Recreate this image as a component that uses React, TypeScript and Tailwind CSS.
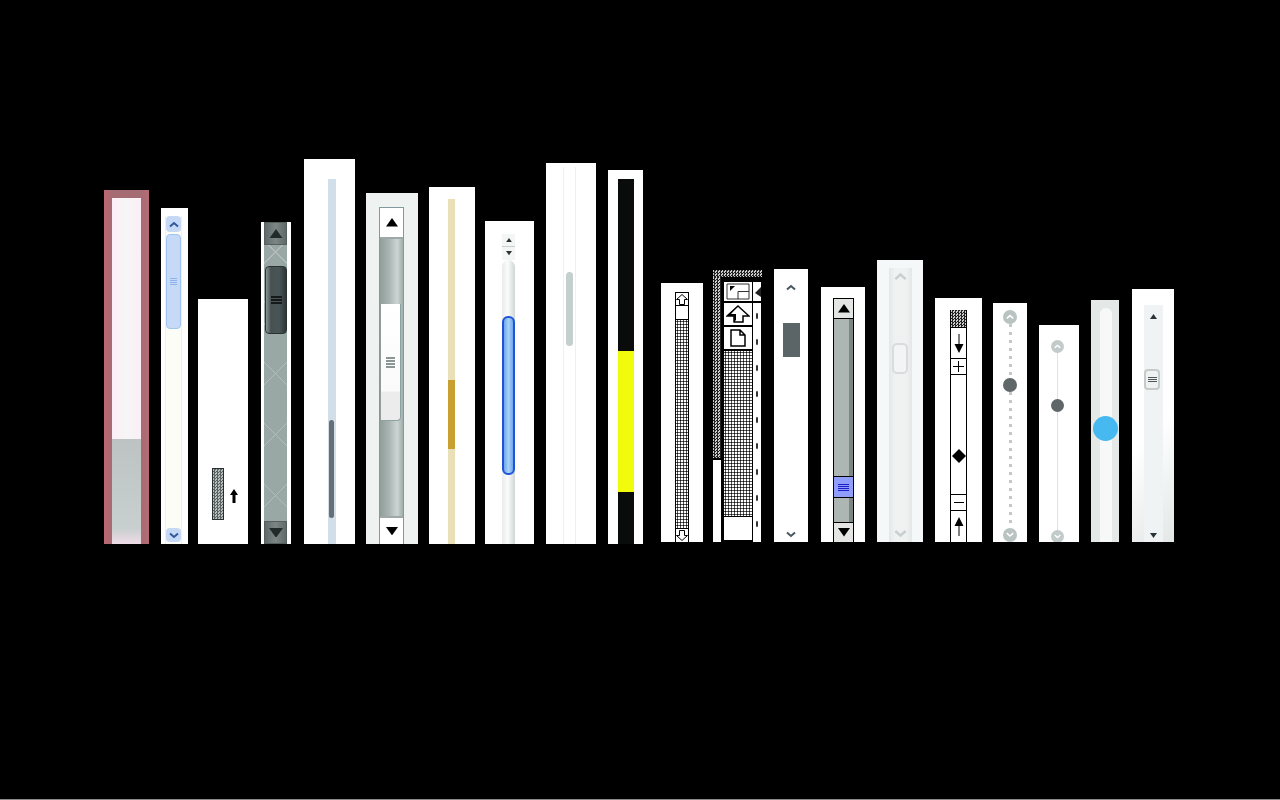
import type { ReactNode } from "react";

// small drawn glyphs used by the scrollbar buttons
function Tri({ down, size = 12, className = "text-black" }: { down?: boolean; size?: number; className?: string }) {
  return (
    <svg width={size} height={size * 0.7} viewBox="0 0 10 7" className={className}>
      <path d={down ? "M0 0H10L5 7Z" : "M5 0L10 7H0Z"} fill="currentColor" />
    </svg>
  );
}

function Chev({ down, className = "text-[#46585c]", size = 10 }: { down?: boolean; className?: string; size?: number }) {
  return (
    <svg width={size} height={size * 0.7} viewBox="0 0 10 7" className={className}>
      <path d={down ? "M1 1.5L5 5L9 1.5" : "M1 5.5L5 2L9 5.5"} fill="none" stroke="currentColor" strokeWidth="2" />
    </svg>
  );
}

function Stick({ down }: { down?: boolean }) {
  return (
    <svg width="10" height="19" viewBox="0 0 10 19" className="text-black">
      <path d={down ? "M4.5 0V10H0.5L5 19L9.5 10H5.5V0Z" : "M4.5 19V9H0.5L5 0L9.5 9H5.5V19Z"} fill="currentColor" />
    </svg>
  );
}

function Hollow({ down }: { down?: boolean }) {
  return (
    <svg width="12" height="11" viewBox="0 0 12 11" className="text-black">
      <path d={down ? "M3.5 .5H8.5V5.5H11.5L6 10.5L.5 5.5H3.5Z" : "M6 .5L11.5 5.5H8.5V10.5H3.5V5.5H.5Z"} fill="none" stroke="currentColor" />
    </svg>
  );
}

function Lines({ n, className }: { n: number; className: string }) {
  return (
    <div className="flex flex-col gap-[1px]">
      {Array.from({ length: n }).map((_, i) => (
        <div key={i} className={className} />
      ))}
    </div>
  );
}

const dots = "bg-[radial-gradient(#111_0.9px,#fff_1.25px)] bg-[length:3px_3px]";
const checker = "bg-[repeating-conic-gradient(#222_0_25%,#ccc_0_50%)] bg-[length:3px_3px]";

function FirstGroup() {
  return (
    <>
      {/* rose frame */}
      <div className="w-[45px] h-[354px] bg-[linear-gradient(90deg,#bd6573,#a66c74_18%,#a66c74_82%,#b86a75)] pt-[8px] px-[8px] flex flex-col">
        <div className="w-[29px] h-[241px] bg-[linear-gradient(90deg,#fdeef8,#f6f6f4_50%,#fbeef8)]" />
        <div className="w-[29px] flex-1 bg-[linear-gradient(180deg,#bdc3c3,#c8cfcf_85%,#efdce6)]" />
      </div>

      {/* xp blue */}
      <div className="ml-[12px] w-[27px] h-[336px] bg-white pt-[8px] pl-[4px] flex flex-col">
        <div className="w-[17px] flex-1 bg-[#fdfdf8] border-x border-[#f0f2ea] flex flex-col items-center">
          <div className="w-[15px] h-[16px] shrink-0 bg-[#c5d9f7] flex items-center justify-center rounded-sm"><Chev className="text-[#33589a]" /></div>
          <div className="mt-[2px] w-[15px] h-[95px] shrink-0 bg-[#c6daf7] border border-[#a2c4f1] rounded-sm flex items-center justify-center"><Lines n={4} className="w-[7px] h-[1px] bg-[#8eb2ea]" /></div>
          <div className="flex-1" />
          <div className="mb-[2px] w-[15px] h-[14px] shrink-0 bg-[#c5d9f7] flex items-center justify-center rounded-sm"><Chev down className="text-[#33589a]" /></div>
        </div>
      </div>

      {/* dithered thumb with arrow */}
      <div className="ml-[10px] w-[50px] h-[245px] bg-white flex items-start pt-[169px] pl-[14px]">
        <div className="w-[12px] h-[52px] border border-[#26302e] bg-[repeating-conic-gradient(#5a6362_0_25%,#b8bfbe_0_50%)] bg-[length:3px_3px]" />
        <div className="ml-[6px] mt-[21px] w-[8px] h-[14px] flex items-center justify-center">
          <svg width="8" height="14" viewBox="0 0 8 14"><path d="M2.5 14V6H0L4 0L8 6H5.5V14Z" fill="#000" /></svg>
        </div>
      </div>

      {/* dark metal */}
      <div className="ml-[13px] w-[30px] h-[322px] bg-white pl-[3px] pr-[4px]">
        <div className="h-full flex flex-col bg-[#9aa8a5] bg-[repeating-linear-gradient(45deg,transparent_0_42px,#b2bdbb_42px_43px),repeating-linear-gradient(-45deg,transparent_0_42px,#b2bdbb_42px_43px)]">
          <div className="h-[23px] bg-[linear-gradient(90deg,#5f6a69,#7c8785_50%,#5f6a69)] border border-[#565f5e] flex items-center justify-center"><Tri className="text-[#222b2b]" size={14} /></div>
          <div className="mt-[21px] ml-[1px] h-[68px] bg-[linear-gradient(90deg,#8a9695,#46514f_25%,#4a5557_65%,#2f3537)] border border-[#2b3133] rounded-sm flex items-center justify-center"><Lines n={3} className="w-[11px] h-[2px] bg-[#16191a]" /></div>
          <div className="flex-1" />
          <div className="h-[23px] bg-[linear-gradient(90deg,#5f6a69,#7c8785_50%,#5f6a69)] border border-[#565f5e] flex items-center justify-center"><Tri down className="text-[#222b2b]" size={14} /></div>
        </div>
      </div>

      {/* slim slate */}
      <div className="ml-[13px] w-[51px] h-[385px] bg-white pt-[20px] pl-[24px]">
        <div className="w-[8px] h-full bg-[#d2dfe9] pt-[241px] pl-[1px]">
          <div className="w-[5px] h-[98px] rounded-full bg-[#646f78]" />
        </div>
      </div>

      {/* light aqua */}
      <div className="ml-[11px] w-[52px] h-[351px] bg-[#eef3f1] pt-[14px] pl-[13px]">
        <div className="w-[25px] h-full border-x border-t border-[#8399a0] flex flex-col bg-[linear-gradient(90deg,#8f9d9b,#aab5b2_40%,#cdd5d2_75%,#9fadab)]">
          <div className="h-[31px] bg-white flex items-center justify-center border-b-2 border-[#9ca9a8]"><Tri size={12} /></div>
          <div className="h-[65px]" />
          <div className="w-[20px] ml-[1px] h-[117px] flex flex-col items-center justify-center bg-[linear-gradient(180deg,#fff,#fafafa_75%,#ececec_76%)] border-r border-b border-[#8fa2a2] rounded-br-sm"><Lines n={4} className="w-[9px] h-[2px] bg-[#8b9593]" /></div>
          <div className="flex-1" />
          <div className="h-[28px] bg-white flex items-center justify-center border-t-2 border-[#9ca9a8]"><Tri down size={12} /></div>
        </div>
      </div>

      {/* gold */}
      <div className="ml-[11px] w-[46px] h-[357px] bg-white pt-[12px] pl-[19px]">
        <div className="w-[7px] h-full bg-[#e9dfb9] pt-[181px]">
          <div className="h-[69px] bg-[#c8a032]" />
        </div>
      </div>

      {/* aqua blue */}
      <div className="ml-[10px] w-[49px] h-[323px] bg-white pt-[13px] pl-[17px] flex flex-col">
        <div className="w-[13px] h-[13px] shrink-0 bg-[#f4f5f5] border-b border-[#c9cfcf] flex items-center justify-center"><Tri className="text-[#2a3335]" size={6} /></div>
        <div className="w-[13px] h-[13px] shrink-0 bg-[#f4f5f5] flex items-center justify-center"><Tri down className="text-[#2a3335]" size={6} /></div>
        <div className="w-[13px] flex-1 rounded-t-full bg-[linear-gradient(90deg,#e8ecec,#fbfbfb_45%,#cfd6d6)] pt-[56px]">
          <div className="h-[159px] rounded-[6px] border-2 border-[#1f54d8] bg-[linear-gradient(90deg,#6fa6ec,#a9d2f8_50%,#6ea6ee)]" />
        </div>
      </div>

      {/* faint rails */}
      <div className="ml-[12px] w-[50px] h-[381px] bg-white pt-[4px] pl-[17px]">
        <div className="w-[13px] h-full border-x border-[#eef1f1] pt-[105px] pl-[2px]">
          <div className="w-[7px] h-[74px] rounded-full bg-[#c5cfce]" />
        </div>
      </div>

      {/* black and yellow */}
      <div className="ml-[12px] w-[35px] h-[374px] bg-white pt-[9px] pl-[10px]">
        <div className="w-[16px] h-full bg-[#0a0c0c] pt-[172px]">
          <div className="h-[141px] bg-[#f2fb0c]" />
        </div>
      </div>
    </>
  );
}

function SecondGroup() {
  return (
    <>
      {/* mac classic */}
      <div className="ml-[18px] w-[42px] h-[259px] bg-white pt-[9px] pl-[14px]">
        <div className="w-[14px] h-full border-x border-t border-black flex flex-col">
          <div className="h-[13px] border-b border-black flex items-center justify-center"><Hollow /></div>
          <div className="h-[14px] border-b border-black bg-white" />
          <div className={`flex-1 ${dots}`} />
          <div className="h-[14px] border-t border-black flex items-center justify-center"><Hollow down /></div>
        </div>
      </div>

      {/* mac window edge */}
      <div className="ml-[10px] w-[49px] h-[272px] flex flex-col">
        <div className={`h-[7px] ${checker}`} />
        <div className="flex-1 flex">
          <div className="w-[8px] flex flex-col">
            <div className={`h-[181px] ${checker}`} />
            <div className="h-[2px]" />
            <div className="flex-1 bg-white" />
          </div>
          <div className="ml-[3px] w-[28px] pt-[5px] flex flex-col gap-[2px]">
            <div className="h-[19px] bg-white flex items-center justify-center">
              <svg width="24" height="17" viewBox="0 0 24 17"><path d="M1 1H23V16H1ZM12 8.5H23M12 8.5V16" fill="none" stroke="#333" strokeWidth="1" /><path d="M4 3H9L4 8Z" fill="#000" /></svg>
            </div>
            <div className="h-[22px] bg-white flex items-center justify-center">
              <svg width="24" height="18" viewBox="0 0 24 18"><path d="M12 1L23 11H17V17H8V11H1Z" fill="#fff" stroke="#000" strokeWidth="1.5" /><path d="M12 1L1 11H8V17L10 15V9H5Z" fill="#000" /></svg>
            </div>
            <div className="h-[22px] bg-white flex items-center justify-center">
              <svg width="18" height="18" viewBox="0 0 18 18"><path d="M2 1H11L16 6V17H2ZM11 1V6H16" fill="none" stroke="#000" strokeWidth="1.5" /></svg>
            </div>
            <div className={`h-[165px] ${dots}`} />
            <div className="h-[23px] -mt-[1px] bg-white" />
          </div>
          <div className="ml-[1px] w-[8px] pt-[5px] flex flex-col gap-[2px]">
            <div className="h-[19px] bg-white flex items-center">
              <svg width="8" height="14" viewBox="0 0 8 14"><path d="M8 2L2 8L8 12Z" fill="#222" /></svg>
            </div>
            <div className="flex-1 bg-white bg-[radial-gradient(#333_0.8px,transparent_1.2px)] bg-[length:8px_26px]" />
          </div>
        </div>
      </div>

      {/* dark square thumb */}
      <div className="ml-[12px] w-[34px] h-[273px] bg-white flex flex-col items-center pt-[15px] pb-[4px]">
        <Chev />
        <div className="mt-[32px] w-[17px] h-[34px] bg-[#5b6466]" />
        <div className="flex-1" />
        <Chev down />
      </div>

      {/* motif with blue thumb */}
      <div className="ml-[13px] w-[44px] h-[255px] bg-white pt-[11px] pl-[12px]">
        <div className="w-[21px] h-full border-x border-t border-black flex flex-col bg-[linear-gradient(90deg,#aeb6b3_80%,#7c8684_80%)]">
          <div className="h-[20px] bg-[#e3e6e3] border-b border-black flex items-center justify-center"><Tri size={12} /></div>
          <div className="h-[157px]" />
          <div className="h-[22px] bg-[#8f9dfb] border-y border-black flex items-center justify-center"><Lines n={4} className="w-[11px] h-[1px] bg-[#1c1cc8]" /></div>
          <div className="flex-1" />
          <div className="h-[20px] bg-[#e3e6e3] border-t border-black flex items-center justify-center"><Tri down size={12} /></div>
        </div>
      </div>

      {/* pale frosted */}
      <div className="ml-[12px] w-[46px] h-[282px] bg-[#f5f8f8] pt-[8px] pl-[12px]">
        <div className="w-[23px] h-full bg-[linear-gradient(90deg,#e3e7e7,#f0f2f2_25%,#f0f2f2_75%,#e3e7e7)] flex flex-col items-center pt-[4px] pb-[4px]">
          <Chev className="text-[#c9d0d0]" size={13} />
          <div className="mt-[62px] mr-[1px] w-[16px] h-[31px] rounded-[5px] border-2 border-[#d8dcdc] bg-[#f3f5f5]" />
          <div className="flex-1" />
          <Chev down className="text-[#c9d0d0]" size={13} />
        </div>
      </div>

      {/* athena style */}
      <div className="ml-[12px] w-[47px] h-[244px] bg-white pt-[12px] pl-[15px]">
        <div className="w-[17px] h-full border-x border-black flex flex-col items-center">
          <div className={`w-full h-[17px] shrink-0 ${checker}`} />
          <div className="w-full h-[31px] shrink-0 border-t border-black flex items-center justify-center"><Stick down /></div>
          <div className="w-full h-[16px] shrink-0 border-t border-black flex items-center justify-center text-[0px]">
            <svg width="11" height="11" viewBox="0 0 11 11"><path d="M5.5 0V11M0 5.5H11" stroke="#000" /></svg>
          </div>
          <div className="w-full h-[120px] shrink-0 border-t border-black flex flex-col items-center pt-[74px]">
            <svg width="14" height="14" viewBox="0 0 14 14"><path d="M7 0L14 7L7 14L0 7Z" fill="#000" /></svg>
          </div>
          <div className="w-full h-[16px] shrink-0 border-t border-black flex items-center justify-center">
            <div className="w-[10px] h-[1px] bg-black" />
          </div>
          <div className="w-full flex-1 border-t border-black flex items-center justify-center"><Stick /></div>
        </div>
      </div>

      {/* dotted */}
      <div className="ml-[11px] w-[34px] h-[239px] bg-white flex flex-col items-center pt-[7px] overflow-hidden">
        <div className="w-[14px] h-[14px] shrink-0 rounded-full bg-[#b9c3c1] flex items-center justify-center"><Chev className="text-white" size={8} /></div>
        <div className="w-[3px] h-[54px] shrink-0 bg-[linear-gradient(#c2cac8_3px,transparent_3px)] bg-[length:3px_8px]" />
        <div className="w-[14px] h-[14px] shrink-0 rounded-full bg-[#5f6768]" />
        <div className="w-[3px] flex-1 bg-[linear-gradient(#c2cac8_3px,transparent_3px)] bg-[length:3px_8px]" />
        <div className="w-[14px] h-[14px] shrink-0 rounded-full bg-[#b9c3c1] flex items-center justify-center"><Chev down className="text-white" size={8} /></div>
      </div>

      {/* line slider */}
      <div className="ml-[12px] w-[40px] h-[217px] bg-white flex flex-col items-center pt-[15px] pr-[4px] overflow-hidden">
        <div className="w-[13px] h-[13px] shrink-0 rounded-full bg-[#c3cbca] flex items-center justify-center"><Chev className="text-white" size={7} /></div>
        <div className="w-[1px] h-[46px] shrink-0 bg-[#dfe4e3]" />
        <div className="w-[13px] h-[13px] shrink-0 rounded-full bg-[#5f6768]" />
        <div className="w-[1px] flex-1 bg-[#dfe4e3]" />
        <div className="w-[13px] h-[13px] shrink-0 rounded-full bg-[#c3cbca] -mb-[1px] flex items-center justify-center"><Chev down className="text-white" size={7} /></div>
      </div>

      {/* blue dot */}
      <div className="relative ml-[12px] w-[28px] h-[242px] bg-[#e4e8e7] pt-[8px] pl-[9px]">
        <div className="w-[12px] h-full rounded-t-[6px] bg-[#f7f9f9]" />
        <div className="absolute left-[2px] top-[116px] w-[25px] h-[25px] rounded-full bg-[#45b9f0]" />
      </div>

      {/* grey grip */}
      <div className="ml-[13px] w-[42px] h-[253px] bg-[linear-gradient(135deg,#fff_55%,#e3e7e6)] pt-[16px] pl-[12px]">
        <div className="w-[19px] h-full bg-[#f0f3f3] flex flex-col items-center pt-[9px] pb-[4px]">
          <Tri className="text-[#2a3335]" size={7} />
          <div className="mt-[50px] mr-[3px] w-[16px] h-[21px] rounded-sm border-2 border-[#c5cbca] bg-[#f0f2f2] flex items-center justify-center"><Lines n={3} className="w-[9px] h-[1px] bg-[#4d5556]" /></div>
          <div className="flex-1" />
          <Tri down className="text-[#2a3335]" size={7} />
        </div>
      </div>
    </>
  );
}

function Row({ children }: { children: ReactNode }) {
  return <div className="flex items-end">{children}</div>;
}

export default function App() {
  return (
    <div className="w-[1280px] h-[800px] bg-black flex flex-col overflow-hidden">
      <div className="mt-[159px] pl-[104px] h-[385px] flex items-end">
        <Row><FirstGroup /></Row>
        <div className="pb-[2px]">
          <Row><SecondGroup /></Row>
        </div>
      </div>
      <div className="flex-1" />
      <div className="h-[1px] bg-[#8a8a8a]" />
    </div>
  );
}
